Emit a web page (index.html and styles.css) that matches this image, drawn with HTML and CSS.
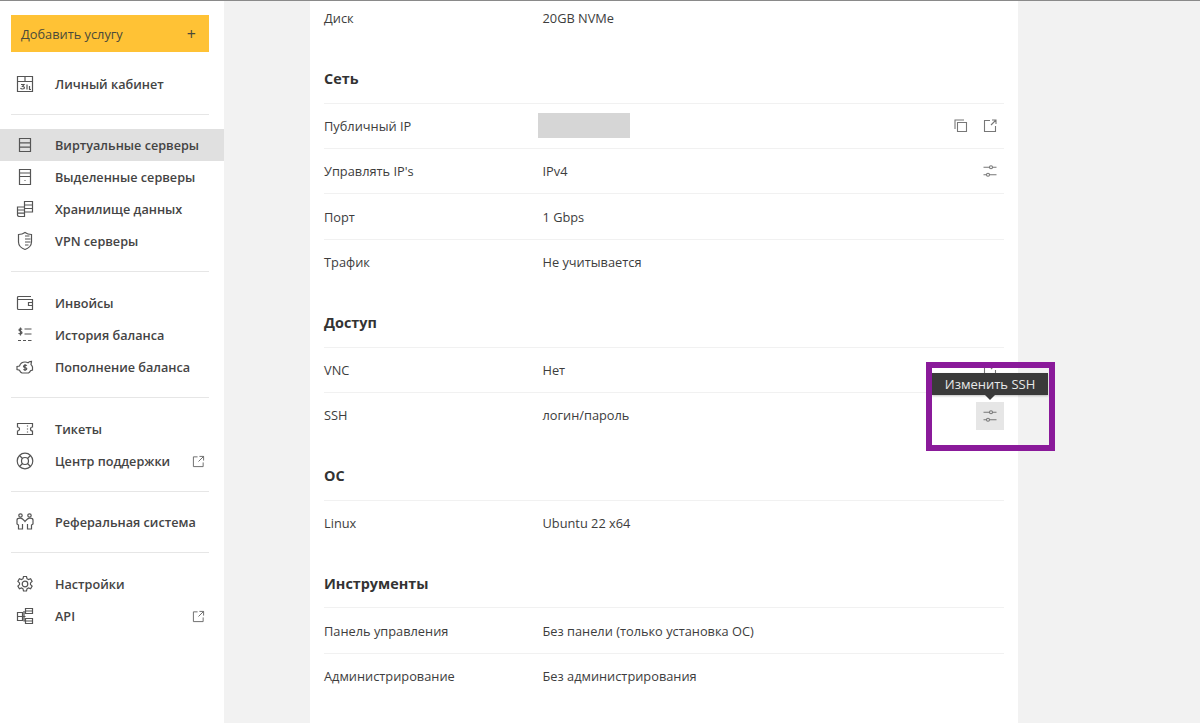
FILE: index.html
```html
<!DOCTYPE html>
<html lang="ru">
<head>
<meta charset="UTF-8">
<title>Виртуальные серверы</title>
<link rel="stylesheet" href="styles.css">
</head>
<body>

<div class="page">
  <aside class="sidebar">
    <button class="add-btn"><span>Добавить услугу</span><span class="plus">+</span></button>

    <nav class="nav nav-first">
      <a class="nav-item">
        <svg class="icon" viewBox="0 0 20 20"><path d="M2.500 2.500h15v15h-15zM2.500 7.500h15M10 2.500v5M6 10.500h3l-1.500 2c1.500 0 2 .7 2 1.300s-.8 1.200-2 1.200-1.700-.4-2-1M12 10.500v5M14.500 12v3.500h1.500"/></svg>
        <span>Личный кабинет</span>
      </a>
    </nav>

    <nav class="nav nav-tight">
      <a class="nav-item active">
        <svg class="icon" viewBox="0 0 20 20"><path d="M4.500 3.500h11v13h-11zM4.500 7.800h11M4.500 12.200h11"/></svg>
        <span>Виртуальные серверы</span>
      </a>
      <a class="nav-item">
        <svg class="icon" viewBox="0 0 20 20"><path d="M4.500 2.500h11v15h-11zM4.500 6h11M4.500 9.500h11M9.500 13.500h1"/></svg>
        <span>Выделенные серверы</span>
      </a>
      <a class="nav-item">
        <svg class="icon" viewBox="0 0 20 20"><path d="M9.500 2.500h8v10.500h-8zM9.500 6h8M9.500 9.500h8M2.500 8h7v9.500h-4.500c-1.500 0-2.500-.5-2.500-1.500zM2.500 11h7M2.500 14.200h7"/></svg>
        <span>Хранилище данных</span>
      </a>
      <a class="nav-item">
        <svg class="icon" viewBox="0 0 20 20"><path d="M10 1.500c2 1.500 4 2 6.500 2v7.500c0 3.500-3 6.500-6.500 7.500-3.500-1-6.500-4-6.500-7.500V3.500c2.500 0 4.500-.5 6.500-2zM10 5h4.500M10 8h5.500M10 11h5.500M10 14h3.500"/></svg>
        <span>VPN серверы</span>
      </a>
    </nav>

    <nav class="nav">
      <a class="nav-item">
        <svg class="icon" viewBox="0 0 20 20"><path d="M16 3.500H3.500a1 1 0 0 0-1 1v11a1 1 0 0 0 1 1h14v-10h-15M17.500 9.500h-4v3h4"/></svg>
        <span>Инвойсы</span>
      </a>
      <a class="nav-item">
        <svg class="icon" viewBox="0 0 20 20"><path d="M9.500 4h7M9.500 9h7M3 15.500h3M8 15.500h3M13 15.500h3.500M7 4.500C6.500 3.500 4 3.500 4 5s3 1 3 2.700c0 1.500-2.700 1.500-3.300.3M5.500 2.500v8"/></svg>
        <span>История баланса</span>
      </a>
      <a class="nav-item">
        <svg class="icon" viewBox="0 0 20 20"><path d="M2 9.500l2.500-.5c.8-2.500 3-4 5.500-4 1.200 0 2.200.3 3 .8.8-1.200 2-1.500 3.500-1.500l-.5 3.300c.7.700 1.200 1.400 1.500 2.400v3l-2 .8c-.4 1-1 1.700-2 2.200H7c-1.200-.5-2-1.500-2.500-2.800L2 12.500zM11.800 8.800c-.5-.8-3.300-.9-3.300.6s3.300.8 3.300 2.300-2.800 1.400-3.300.5M10 7v7"/></svg>
        <span>Пополнение баланса</span>
      </a>
    </nav>

    <nav class="nav">
      <a class="nav-item">
        <svg class="icon" viewBox="0 0 20 20"><path d="M2.500 4.500h15V8a2 2 0 0 0 0 4v3.500h-15V12a2 2 0 0 0 0-4zM12.500 6.500v1M12.500 9.500v1M12.500 12.500v1"/></svg>
        <span>Тикеты</span>
      </a>
      <a class="nav-item">
        <svg class="icon" viewBox="0 0 20 20"><circle cx="10" cy="10" r="7.800"/><circle cx="10" cy="10" r="3.500"/><path d="M4.500 4.500l3 3M15.500 4.500l-3 3M4.500 15.500l3-3M15.500 15.500l-3-3"/></svg>
        <span>Центр поддержки</span>
        <svg class="icon-ext" viewBox="0 0 14 14"><path d="M6 2H1.500v10.500H12V8M8 1.500h4.500V6M12.500 1.500L7 7"/></svg>
      </a>
    </nav>

    <nav class="nav nav-tight">
      <a class="nav-item">
        <svg class="icon" viewBox="0 0 20 20"><circle cx="5.500" cy="3.500" r="1.700"/><circle cx="14.500" cy="3.500" r="1.700"/><path d="M2 8c0-1 1-1.800 3.500-1.800 2 0 3 1.500 4.500 3.300 1.500-1.800 2.500-3.300 4.500-3.300C17 6.200 18 7 18 8v4l-1.500 1v4h-4v-5M2 8v4l1.500 1v4h4v-5"/></svg>
        <span>Реферальная система</span>
      </a>
    </nav>

    <nav class="nav">
      <a class="nav-item">
        <svg class="icon" viewBox="0 0 20 20"><circle cx="10" cy="10" r="2.800"/><path d="M8.500 2.500h3l.5 2.200 1.500.8 2.100-.7 1.500 2.600-1.600 1.500v1.700l1.600 1.500-1.500 2.600-2.100-.7-1.500.8-.5 2.200h-3l-.5-2.200-1.500-.8-2.100.7-1.500-2.600 1.600-1.500V8.900L2.900 7.400l1.500-2.600 2.100.7 1.500-.8z"/></svg>
        <span>Настройки</span>
      </a>
      <a class="nav-item">
        <svg class="icon" viewBox="0 0 20 20"><path d="M10.500 2.500h7v5h-7zM10.500 5h7M2.500 6.500h5v8h-5zM2.500 10.500h5M10.500 12.500h7v5h-7zM10.500 15h7M7.500 10.500h3M9 5v10h1.500"/></svg>
        <span>API</span>
        <svg class="icon-ext" viewBox="0 0 14 14"><path d="M6 2H1.500v10.500H12V8M8 1.500h4.500V6M12.500 1.500L7 7"/></svg>
      </a>
    </nav>
  </aside>

  <main class="content">
    <section class="section section-top">
      <div class="row">
        <div class="label">Диск</div>
        <div class="value">20GB NVMe</div>
      </div>
    </section>

    <section class="section">
      <h2>Сеть</h2>
      <div class="row">
        <div class="label">Публичный IP</div>
        <div class="value"><div class="ip-mask"></div></div>
        <div class="actions">
          <button class="act">
            <svg viewBox="0 0 14 14"><path d="M1 10V1h9M3.500 3.500h9v9h-9z"/></svg>
          </button>
          <button class="act">
            <svg viewBox="0 0 14 14"><path d="M7 1.500H1.500v11h11V7M9 1h4v4M13 1L8 6"/></svg>
          </button>
        </div>
      </div>
      <div class="row">
        <div class="label">Управлять IP's</div>
        <div class="value">IPv4</div>
        <div class="actions">
          <button class="act">
            <svg viewBox="0 0 14 14"><path d="M.5 3.200h6M9.500 3.200h4M.5 10.800h3M6.500 10.800h7"/><circle cx="8" cy="3.200" r="1.500"/><circle cx="5" cy="10.800" r="1.500"/></svg>
          </button>
        </div>
      </div>
      <div class="row">
        <div class="label">Порт</div>
        <div class="value">1 Gbps</div>
      </div>
      <div class="row">
        <div class="label">Трафик</div>
        <div class="value">Не учитывается</div>
      </div>
    </section>

    <section class="section">
      <h2>Доступ</h2>
      <div class="row">
        <div class="label">VNC</div>
        <div class="value">Нет</div>
        <div class="actions">
          <button class="act">
            <svg viewBox="0 0 14 14"><path d="M7 1.500H1.500v11h11V7M9 1h4v4M13 1L8 6"/></svg>
          </button>
        </div>
      </div>
      <div class="row">
        <div class="label">SSH</div>
        <div class="value">логин/пароль</div>
        <div class="actions">
          <button class="act act-hover">
            <svg viewBox="0 0 14 14"><path d="M.5 3.200h6M9.500 3.200h4M.5 10.800h3M6.500 10.800h7"/><circle cx="8" cy="3.200" r="1.500"/><circle cx="5" cy="10.800" r="1.500"/></svg>
          </button>
        </div>
      </div>
    </section>

    <section class="section">
      <h2>ОС</h2>
      <div class="row">
        <div class="label">Linux</div>
        <div class="value">Ubuntu 22 x64</div>
      </div>
    </section>

    <section class="section">
      <h2>Инструменты</h2>
      <div class="row">
        <div class="label">Панель управления</div>
        <div class="value">Без панели (только установка ОС)</div>
      </div>
      <div class="row">
        <div class="label">Администрирование</div>
        <div class="value">Без администрирования</div>
      </div>
    </section>
  </main>
</div>

<div class="tooltip">Изменить SSH</div>
<div class="highlight"></div>

</body>
</html>
```

FILE: styles.css
```css
* {
  box-sizing: border-box;
}
html, body {
  margin: 0;
  height: 100%;
  overflow: hidden;
}
body {
  font-family: "Open Sans", sans-serif;
  font-size: 12.8px;
  color: #3d3d3d;
  background: #f2f2f2;
  border-top: 1px solid #8a8a8a;
}
.page {
  display: flex;
  height: 722px;
}

/* sidebar */
.sidebar {
  width: 224px;
  flex: none;
  background: #fff;
  padding-top: 14px;
}
.add-btn {
  display: flex;
  justify-content: space-between;
  align-items: center;
  width: 198px;
  height: 37px;
  margin-left: 11px;
  padding: 0 13px 0 10px;
  border: none;
  background: #ffc235;
  color: #4a4a3a;
  font-family: inherit;
  font-size: 12.8px;
}
.plus {
  font-size: 16px;
}
.nav {
  padding: 15px 0;
  position: relative;
}
.nav::after {
  content: "";
  position: absolute;
  left: 11px;
  bottom: 0;
  width: 198px;
  height: 1px;
  background: #e6e6e6;
}
.nav:last-child::after {
  display: none;
}
.nav-first {
  padding-top: 16px;
}
.nav-tight {
  padding-top: 14px;
}
.nav-item {
  display: flex;
  align-items: center;
  height: 32px;
  padding-left: 15px;
  padding-right: 19px;
  font-size: 12.65px;
  font-weight: 600;
  color: #444;
}
.nav-item.active {
  background: #e0e0e0;
}
.icon {
  width: 20px;
  height: 20px;
  flex: none;
  margin-right: 20px;
  fill: none;
  stroke: #555;
  stroke-width: 1.2;
}
.icon-ext {
  width: 13px;
  height: 13px;
  margin-left: auto;
  fill: none;
  stroke: #666;
  stroke-width: 1;
}

/* details */
.content {
  width: 708px;
  margin-left: 86px;
  height: 760px;
  margin-top: -6px;
  padding: 0 14px;
  background: #fff;
}
.section h2 {
  display: flex;
  align-items: center;
  height: 24px;
  margin: 26.3px 0 12px;
  font-size: 14.4px;
  font-weight: 700;
  color: #333;
}
.row {
  display: flex;
  align-items: center;
  height: 45.4px;
  border-top: 1px solid #f1f1f1;
}
.section-top .row {
  border-top: none;
}
.label {
  width: 218.5px;
  flex: none;
}
.value {
  flex: 1;
}
.ip-mask {
  width: 92px;
  height: 25px;
  margin-left: -5px;
  background: #d6d6d6;
}
.actions {
  display: flex;
  gap: 1px;
}
.act {
  display: flex;
  align-items: center;
  justify-content: center;
  width: 28px;
  height: 28px;
  padding: 0;
  border: none;
  background: none;
}
.act svg {
  width: 14px;
  height: 14px;
  fill: none;
  stroke: #777;
  stroke-width: 1.1;
}
.act-hover {
  margin-top: 1px;
  background: #e6e6e6;
}

/* overlays */
.tooltip {
  position: absolute;
  left: 932px;
  top: 373px;
  width: 116px;
  height: 22px;
  line-height: 22px;
  text-align: center;
  background: #3a3a3a;
  color: #e8e8e8;
  font-size: 13px;
  box-shadow: 0 1px 2px rgba(0,0,0,0.25);
}
.tooltip::after {
  content: "";
  position: absolute;
  left: 53px;
  top: 22px;
  border: 5px solid transparent;
  border-top-color: #3a3a3a;
  border-bottom: none;
}
.highlight {
  position: absolute;
  left: 926px;
  top: 362px;
  width: 129px;
  height: 89px;
  border: 6px solid #8a1a9a;
  pointer-events: none;
}
```
